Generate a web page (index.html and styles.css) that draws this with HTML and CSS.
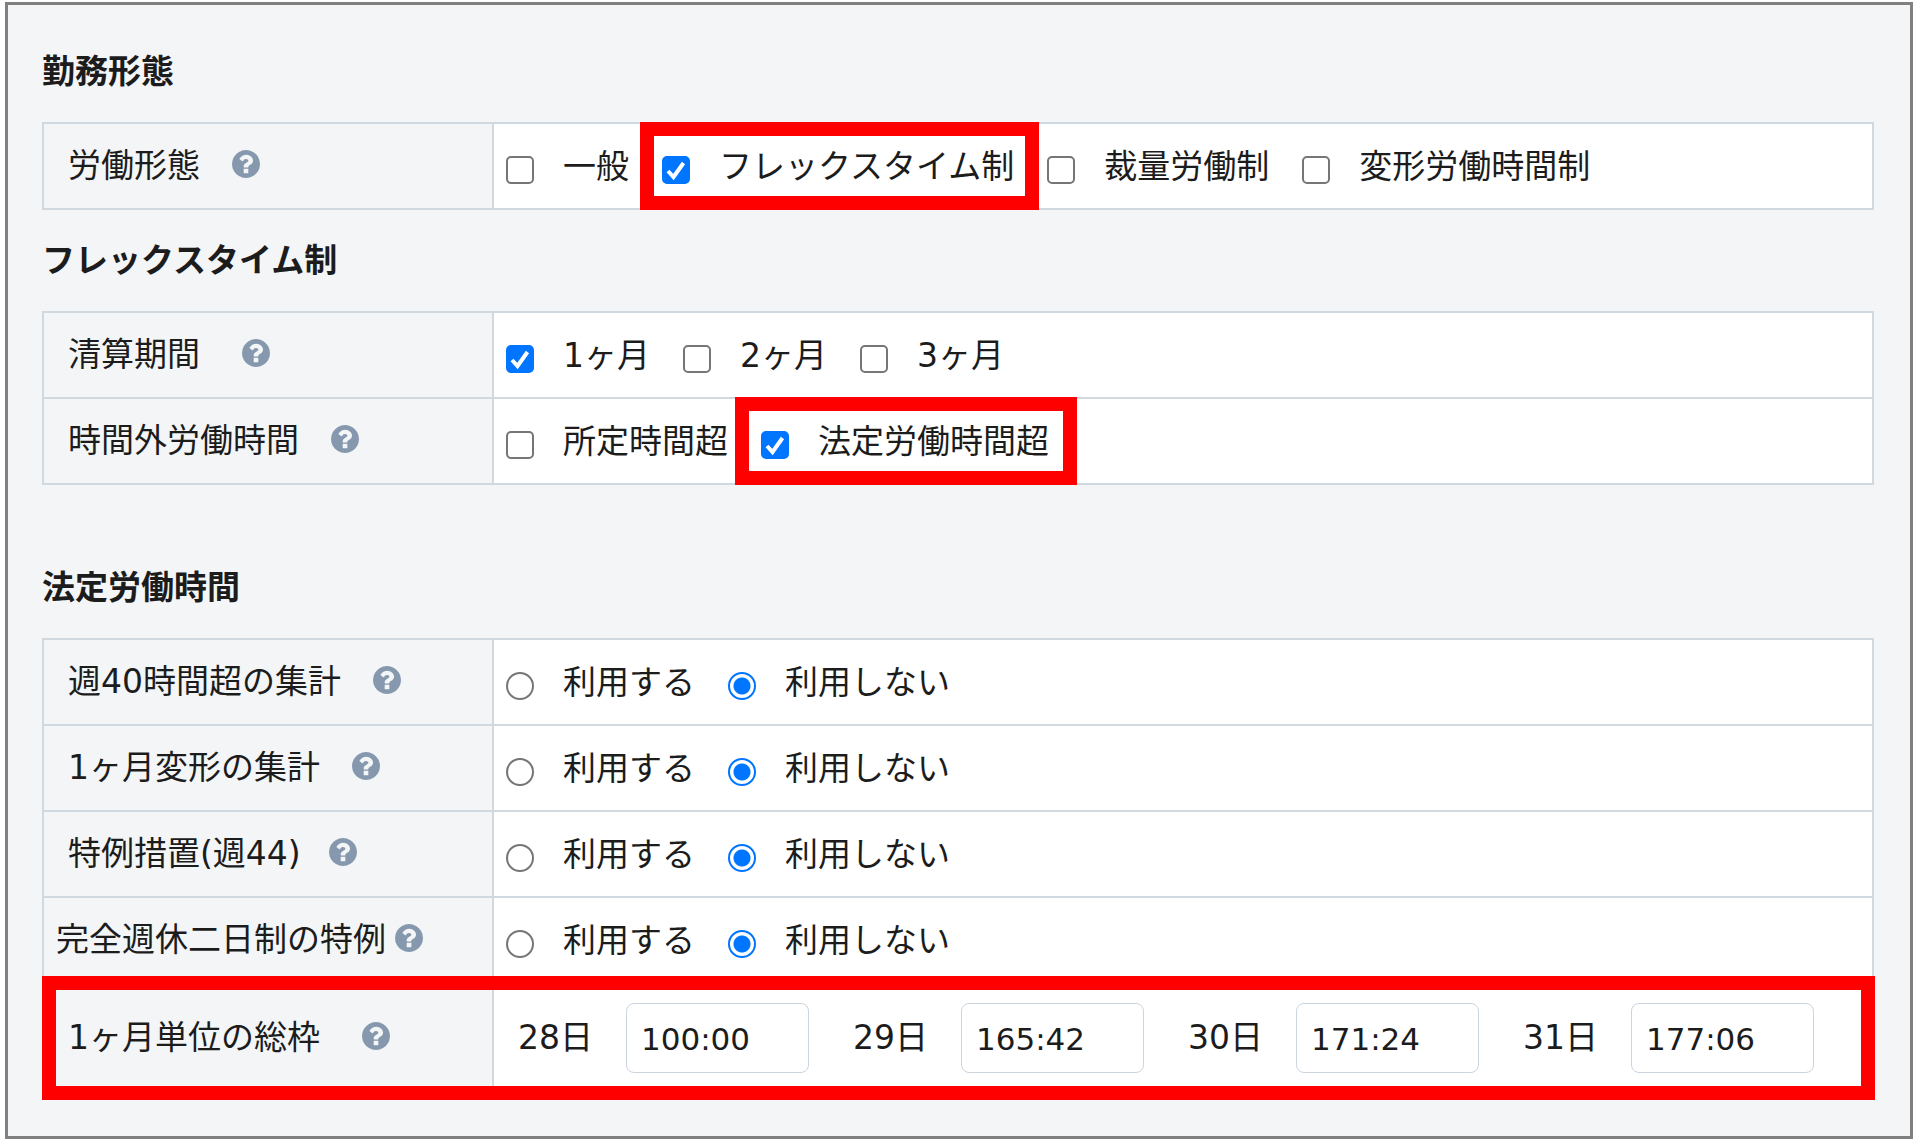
FILE: index.html
```html
<!DOCTYPE html>
<html lang="ja">
<head>
<meta charset="utf-8">
<meta name="viewport" content="width=device-width, initial-scale=1">
<title>勤務形態</title>
<link rel="stylesheet" href="styles.css">
</head>
<body>
<svg class="sprite" aria-hidden="true">
  <symbol id="help" viewBox="128 128 1536 1536">
    <path d="M1024 1376v-192q0-14-9-23t-23-9h-192q-14 0-23 9t-9 23v192q0 14 9 23t23 9h192q14 0 23-9t9-23zm256-672q0-88-55.500-163t-138.500-116-170-41q-243 0-371 213-15 24 8 42l132 100q7 6 19 6 16 0 25-12 53-68 86-92 34-24 86-24 48 0 85.500 26t37.500 59q0 38-20 61t-68 45q-63 28-115.500 86.500t-52.500 125.500v36q0 14 9 23t23 9h192q14 0 23-9t9-23q0-19 21.500-49.500t54.500-49.500q32-18 49-28.500t46-35 44.500-48 28-60.500 12.500-81zm384 192q0 209-103 385.500t-279.500 279.500-385.500 103-385.500-103-279.500-279.500-103-385.500 103-385.500 279.500-279.500 385.500-103 385.500 103 279.500 279.500 103 385.500z"/>
  </symbol>
</svg>
<main class="panel">
  <section class="section">
    <h2 class="heading">勤務形態</h2>
    <table class="settings">
      <tr>
        <th scope="row"><div class="name">労働形態<button type="button" class="help" aria-label="ヘルプ"><svg><use href="#help"/></svg></button></div></th>
        <td><div class="options">
          <label class="option"><input type="checkbox">一般</label>
          <label class="option marked"><input type="checkbox" checked>フレックスタイム制</label>
          <label class="option"><input type="checkbox">裁量労働制</label>
          <label class="option"><input type="checkbox">変形労働時間制</label>
        </div></td>
      </tr>
    </table>
  </section>

  <section class="section">
    <h2 class="heading">フレックスタイム制</h2>
    <table class="settings">
      <tr>
        <th scope="row"><div class="name name-wide">清算期間<button type="button" class="help" aria-label="ヘルプ"><svg><use href="#help"/></svg></button></div></th>
        <td><div class="options">
          <label class="option"><input type="checkbox" checked>1ヶ月</label>
          <label class="option"><input type="checkbox">2ヶ月</label>
          <label class="option"><input type="checkbox">3ヶ月</label>
        </div></td>
      </tr>
      <tr>
        <th scope="row"><div class="name">時間外労働時間<button type="button" class="help" aria-label="ヘルプ"><svg><use href="#help"/></svg></button></div></th>
        <td><div class="options">
          <label class="option"><input type="checkbox">所定時間超</label>
          <label class="option marked marked-wide"><input type="checkbox" checked>法定労働時間超</label>
        </div></td>
      </tr>
    </table>
  </section>

  <section class="section section-spaced">
    <h2 class="heading">法定労働時間</h2>
    <table class="settings">
      <tr>
        <th scope="row"><div class="name">週40時間超の集計<button type="button" class="help" aria-label="ヘルプ"><svg><use href="#help"/></svg></button></div></th>
        <td><div class="options">
          <label class="option"><input type="radio" name="week40">利用する</label>
          <label class="option"><input type="radio" name="week40" checked>利用しない</label>
        </div></td>
      </tr>
      <tr>
        <th scope="row"><div class="name">1ヶ月変形の集計<button type="button" class="help" aria-label="ヘルプ"><svg><use href="#help"/></svg></button></div></th>
        <td><div class="options">
          <label class="option"><input type="radio" name="month">利用する</label>
          <label class="option"><input type="radio" name="month" checked>利用しない</label>
        </div></td>
      </tr>
      <tr>
        <th scope="row"><div class="name name-snug">特例措置(週44)<button type="button" class="help" aria-label="ヘルプ"><svg><use href="#help"/></svg></button></div></th>
        <td><div class="options">
          <label class="option"><input type="radio" name="week44">利用する</label>
          <label class="option"><input type="radio" name="week44" checked>利用しない</label>
        </div></td>
      </tr>
      <tr>
        <th scope="row"><div class="name name-tight">完全週休二日制の特例<button type="button" class="help" aria-label="ヘルプ"><svg><use href="#help"/></svg></button></div></th>
        <td><div class="options">
          <label class="option"><input type="radio" name="twodays">利用する</label>
          <label class="option"><input type="radio" name="twodays" checked>利用しない</label>
        </div></td>
      </tr>
      <tr class="marked-row">
        <th scope="row"><div class="name name-wide">1ヶ月単位の総枠<button type="button" class="help" aria-label="ヘルプ"><svg><use href="#help"/></svg></button></div></th>
        <td><div class="limits">
          <label class="limit">28日<input type="text" value="100:00"></label>
          <label class="limit">29日<input type="text" value="165:42"></label>
          <label class="limit">30日<input type="text" value="171:24"></label>
          <label class="limit">31日<input type="text" value="177:06"></label>
        </div></td>
      </tr>
    </table>
  </section>
</main>
</body>
</html>
```

FILE: styles.css
```css
* { box-sizing: border-box; }

body {
  margin: 2px 2px 2px 5px;
  background: #fff;
  color: #1c1c1c;
  font: 33px/48px "DejaVu Sans", "Noto Sans CJK JP", sans-serif;
}

.sprite { display: none; }

.panel {
  padding: 43px 36px 42px 34px;
  border: 3px solid #808080;
  background: #f3f5f7;
}

.section + .section { margin-top: 27px; }
.section + .section-spaced { margin-top: 79px; }

.heading {
  margin: 0 0 26px;
  font-size: 33px;
  font-weight: 700;
}

.settings {
  width: 100%;
  border-collapse: collapse;
  table-layout: fixed;
}

.settings th,
.settings td {
  padding: 0;
  border: 2px solid #d0d8e0;
  white-space: nowrap;
}

.settings th {
  width: 450px;
  font-weight: 400;
  text-align: left;
}

.settings td { background: #fff; }

.name {
  display: flex;
  align-items: center;
  gap: 32px;
  padding-left: 24px;
}

.name-wide { gap: 42px; }
.name-snug { gap: 28px; }
.name-tight { gap: 9px; padding-left: 12px; }

.help {
  display: flex;
  padding: 0 0 4px;
  border: 0;
  background: none;
  color: #8598ad;
  cursor: pointer;
}

.help svg {
  width: 28px;
  height: 28px;
  fill: currentColor;
}

.options {
  display: flex;
  gap: 33px;
  height: 84px;
  padding-left: 12px;
}

.option {
  position: relative;
  display: flex;
  align-items: center;
  gap: 29px;
  padding-top: 2px;
}

.option input {
  appearance: none;
  width: 28px;
  height: 28px;
  margin: 5px 0 0;
  border: 2px solid #767676;
  border-radius: 5px;
  background: #fff;
}

.option input[type="radio"] { border-radius: 50%; }

.option input[type="checkbox"]:checked {
  border-color: #0075ff;
  background: #0075ff url("data:image/svg+xml,%3Csvg xmlns='http://www.w3.org/2000/svg' viewBox='0 0 24 24'%3E%3Cpath d='M4 13l5.500 6L19.500 5' fill='none' stroke='white' stroke-width='4'/%3E%3C/svg%3E") center / 24px 24px no-repeat;
}

.option input[type="radio"]:checked {
  border-color: #0075ff;
  background: radial-gradient(circle, #0075ff 8px, #fff 9px);
}

.marked::after {
  content: "";
  position: absolute;
  inset: -2px -25px -2px -22px;
  border: 14px solid #f00;
  pointer-events: none;
}

.marked-wide::after { inset: -2px -28px -2px -26px; }

.marked-row { position: relative; }

.marked-row td::after {
  content: "";
  position: absolute;
  inset: -7px -2px -7px -1px;
  border: 14px solid #f00;
  pointer-events: none;
}

.limits {
  display: flex;
  align-items: center;
  gap: 44px;
  height: 108px;
  padding-left: 24px;
}

.limit {
  display: flex;
  align-items: center;
  gap: 33px;
}

.limit input {
  width: 183px;
  height: 70px;
  padding: 2px 14px 0;
  border: 1px solid #cbd5df;
  border-radius: 8px;
  background: #fff;
  color: inherit;
  font: inherit;
  font-size: 31px;
}
```
